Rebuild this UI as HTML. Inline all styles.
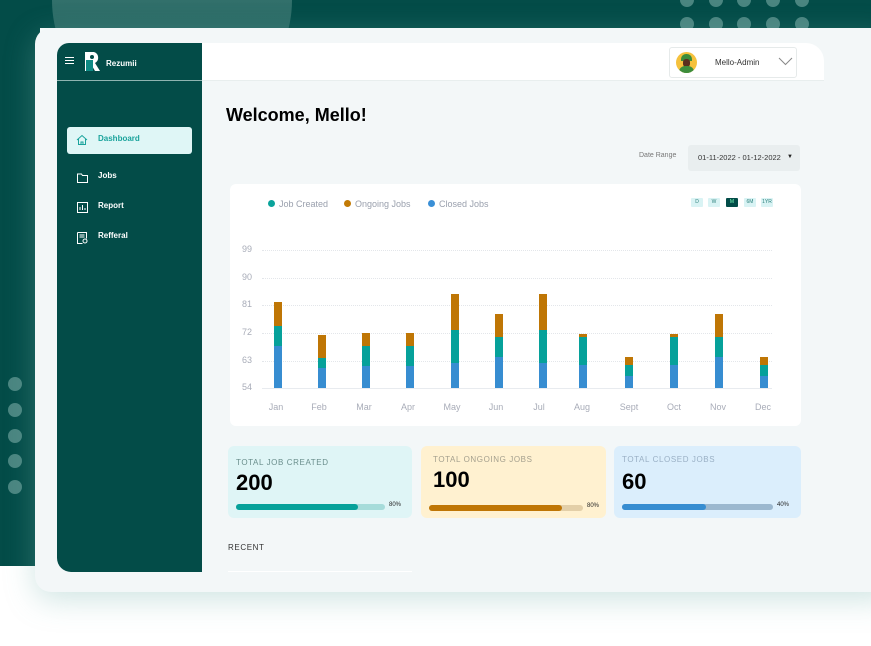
<!DOCTYPE html>
<html><head><meta charset="utf-8"><style>
*{margin:0;padding:0;box-sizing:border-box}
body{width:871px;height:646px;overflow:hidden;background:#fff;font-family:"Liberation Sans",sans-serif;position:relative}
.a{position:absolute}
.dot{position:absolute;width:14px;height:14px;border-radius:50%;background:#4a8580}
.bar{position:absolute;width:8px}
.grid{position:absolute;left:262px;width:510px;border-top:1px dotted #e3e6ea}
.yl{position:absolute;left:242px;width:20px;font-size:9px;color:#a8acb8;text-align:left}
.xl{position:absolute;top:402px;width:40px;margin-left:-20px;text-align:center;font-size:9px;color:#a8acb8}
.nav{position:absolute;left:98px;font-size:8px;color:#fff;font-weight:bold}
.stat{position:absolute;top:446px;height:72px;border-radius:6px}
.stat .t{position:absolute;left:8px;font-size:8px;letter-spacing:.6px}
.stat .n{position:absolute;left:8px;font-size:22px;font-weight:bold;color:#000}
.stat .tr{position:absolute;left:8px;height:6px;border-radius:3px}
.stat .f{position:absolute;left:0;top:0;height:6px;border-radius:3px}
.stat .p{position:absolute;font-size:6px;color:#222}
.pill{position:absolute;top:198px;width:12px;height:9px;background:#d9f3f4;font-size:5px;color:#2a7f7a;text-align:center;line-height:9px;border-radius:1px}
</style></head><body>
<div class="a" style="left:0;top:0;width:871px;height:28px;background:#034c48"></div>
<div class="a" style="left:0;top:0;width:40px;height:566px;background:#034c48"></div>
<div class="a" style="left:52px;top:-120px;width:240px;height:240px;border-radius:50%;background:linear-gradient(#5a8f8b,#2a6a65 60%)"></div>
<div class="dot" style="left:680px;top:-7px"></div><div class="dot" style="left:709px;top:-7px"></div><div class="dot" style="left:737px;top:-7px"></div><div class="dot" style="left:766px;top:-7px"></div><div class="dot" style="left:795px;top:-7px"></div>
<div class="dot" style="left:680px;top:17px"></div><div class="dot" style="left:709px;top:17px"></div><div class="dot" style="left:737px;top:17px"></div><div class="dot" style="left:766px;top:17px"></div><div class="dot" style="left:795px;top:17px"></div>
<div class="dot" style="left:8px;top:377px"></div><div class="dot" style="left:8px;top:403px"></div><div class="dot" style="left:8px;top:429px"></div><div class="dot" style="left:8px;top:454px"></div><div class="dot" style="left:8px;top:480px"></div>
<div class="a" style="left:35px;top:28px;width:860px;height:564px;background:#f3f7f8;border-radius:16px;box-shadow:0 8px 30px rgba(120,180,175,.35)"></div>
<div class="a" style="left:57px;top:43px;width:145px;height:529px;background:#034c48;border-radius:12px 0 0 14px"></div>
<div class="a" style="left:57px;top:80px;width:145px;height:1px;background:#8fb4b1"></div>
<div class="a" style="left:65px;top:57px;width:9px;height:1px;background:#fff;box-shadow:0 3px 0 #fff,0 6px 0 #fff"></div>
<svg class="a" style="left:83px;top:51px" width="20" height="21" viewBox="0 0 20 21"><path d="M2 1h9a6 6 0 0 1 1 11l5 8h-5l-4-7H7v7H2z" fill="#fff"/><rect x="3" y="9" width="7" height="11" fill="#0f8a84"/><circle cx="9" cy="6" r="2" fill="#034c48"/></svg>
<div class="a" style="left:106px;top:59px;font-size:8px;color:#fff;font-weight:bold">Rezumii</div>
<div class="a" style="left:67px;top:127px;width:125px;height:27px;background:#dff6f6;border-radius:3px"></div>
<svg class="a" style="left:76px;top:134px" width="12" height="12" viewBox="0 0 12 12" fill="none" stroke="#1aa39c"><path d="M1 6L6 1.5 11 6M2.5 5v5.5h7V5M5 10.5V8h2v2.5"/></svg>
<div class="nav" style="top:134px;color:#1aa39c">Dashboard</div>
<svg class="a" style="left:77px;top:173px" width="11" height="10" viewBox="0 0 11 10" fill="none" stroke="#fff"><path d="M.5 1h4l1 1.5h5V9.5H.5z"/></svg>
<div class="nav" style="top:171px">Jobs</div>
<svg class="a" style="left:77px;top:202px" width="11" height="11" viewBox="0 0 11 11" fill="none" stroke="#fff"><rect x=".5" y=".5" width="10" height="10"/><path d="M3 8V5M5.5 8V3M8 8V6"/></svg>
<div class="nav" style="top:201px">Report</div>
<svg class="a" style="left:77px;top:232px" width="11" height="12" viewBox="0 0 11 12" fill="none" stroke="#fff"><path d="M.5 .5h9v6M.5 .5v11h5M2.5 3h5M2.5 5h5"/><circle cx="8" cy="9" r="2"/></svg>
<div class="nav" style="top:231px">Refferal</div>
<div class="a" style="left:202px;top:43px;width:622px;height:38px;background:#fff;border-radius:0 18px 0 0;border-bottom:1px solid #e8eeee"></div>
<div class="a" style="left:669px;top:47px;width:128px;height:31px;border:1px solid #e6eaea;border-radius:3px;background:#fff"></div>
<div class="a" style="left:676px;top:52px;width:21px;height:21px;border-radius:50%;background:#f5c13c;overflow:hidden"><div class="a" style="left:5px;top:2px;width:11px;height:7px;background:#3c8d3c;border-radius:5px 5px 0 0"></div><div class="a" style="left:7px;top:7px;width:7px;height:8px;background:#5a2e1e;border-radius:3px"></div><div class="a" style="left:3px;top:14px;width:15px;height:8px;background:#3c8d3c;border-radius:6px 6px 0 0"></div></div>
<div class="a" style="left:715px;top:58px;font-size:8px;color:#333">Mello-Admin</div>
<svg class="a" style="left:778px;top:57px" width="15" height="9" viewBox="0 0 15 9" fill="none" stroke="#888"><path d="M1 1l6.5 6.5L14 1"/></svg>
<div class="a" style="left:226px;top:105px;font-size:18px;font-weight:bold;color:#000">Welcome, Mello!</div>
<div class="a" style="left:639px;top:152px;font-size:7px;color:#777">Date Range</div>
<div class="a" style="left:688px;top:145px;width:112px;height:26px;background:#e9eeef;border-radius:3px"></div>
<div class="a" style="left:698px;top:153px;font-size:7.5px;color:#333">01-11-2022 - 01-12-2022</div>
<div class="a" style="left:787px;top:154px;font-size:6px;color:#222">▼</div>
<div class="a" style="left:230px;top:184px;width:571px;height:242px;background:#fff;border-radius:6px"></div>
<div class="a" style="left:268px;top:200px;width:7px;height:7px;border-radius:50%;background:#0aa39b"></div>
<div class="a" style="left:279px;top:199px;font-size:9px;color:#9aa0ad">Job Created</div>
<div class="a" style="left:344px;top:200px;width:7px;height:7px;border-radius:50%;background:#c27a05"></div>
<div class="a" style="left:355px;top:199px;font-size:9px;color:#9aa0ad">Ongoing Jobs</div>
<div class="a" style="left:428px;top:200px;width:7px;height:7px;border-radius:50%;background:#3a8fd6"></div>
<div class="a" style="left:439px;top:199px;font-size:9px;color:#9aa0ad">Closed Jobs</div>
<div class="pill" style="left:691px">D</div><div class="pill" style="left:708px">W</div><div class="pill" style="left:726px;background:#034c48;color:#7fb">M</div><div class="pill" style="left:744px">6M</div><div class="pill" style="left:761px">1YR</div>
<div class="grid" style="top:250px"></div><div class="grid" style="top:278px"></div><div class="grid" style="top:305px"></div><div class="grid" style="top:333px"></div><div class="grid" style="top:361px"></div><div class="grid" style="top:388px;border-top:1px solid #e8ebef"></div>
<div class="yl" style="top:244px">99</div><div class="yl" style="top:272px">90</div><div class="yl" style="top:299px">81</div><div class="yl" style="top:327px">72</div><div class="yl" style="top:355px">63</div><div class="yl" style="top:382px">54</div>
<div class="bar" style="left:274px;top:302px;height:24px;background:#bf7605"></div><div class="bar" style="left:274px;top:326px;height:20px;background:#06a19a"></div><div class="bar" style="left:274px;top:346px;height:42px;background:#378dd1"></div>
<div class="bar" style="left:318px;top:335px;height:23px;background:#bf7605"></div><div class="bar" style="left:318px;top:358px;height:10px;background:#06a19a"></div><div class="bar" style="left:318px;top:368px;height:20px;background:#378dd1"></div>
<div class="bar" style="left:362px;top:333px;height:13px;background:#bf7605"></div><div class="bar" style="left:362px;top:346px;height:20px;background:#06a19a"></div><div class="bar" style="left:362px;top:366px;height:22px;background:#378dd1"></div>
<div class="bar" style="left:406px;top:333px;height:13px;background:#bf7605"></div><div class="bar" style="left:406px;top:346px;height:20px;background:#06a19a"></div><div class="bar" style="left:406px;top:366px;height:22px;background:#378dd1"></div>
<div class="bar" style="left:451px;top:294px;height:36px;background:#bf7605"></div><div class="bar" style="left:451px;top:330px;height:33px;background:#06a19a"></div><div class="bar" style="left:451px;top:363px;height:25px;background:#378dd1"></div>
<div class="bar" style="left:495px;top:314px;height:23px;background:#bf7605"></div><div class="bar" style="left:495px;top:337px;height:20px;background:#06a19a"></div><div class="bar" style="left:495px;top:357px;height:31px;background:#378dd1"></div>
<div class="bar" style="left:539px;top:294px;height:36px;background:#bf7605"></div><div class="bar" style="left:539px;top:330px;height:33px;background:#06a19a"></div><div class="bar" style="left:539px;top:363px;height:25px;background:#378dd1"></div>
<div class="bar" style="left:579px;top:334px;height:3px;background:#bf7605"></div><div class="bar" style="left:579px;top:337px;height:28px;background:#06a19a"></div><div class="bar" style="left:579px;top:365px;height:23px;background:#378dd1"></div>
<div class="bar" style="left:625px;top:357px;height:8px;background:#bf7605"></div><div class="bar" style="left:625px;top:365px;height:11px;background:#06a19a"></div><div class="bar" style="left:625px;top:376px;height:12px;background:#378dd1"></div>
<div class="bar" style="left:670px;top:334px;height:3px;background:#bf7605"></div><div class="bar" style="left:670px;top:337px;height:28px;background:#06a19a"></div><div class="bar" style="left:670px;top:365px;height:23px;background:#378dd1"></div>
<div class="bar" style="left:715px;top:314px;height:23px;background:#bf7605"></div><div class="bar" style="left:715px;top:337px;height:20px;background:#06a19a"></div><div class="bar" style="left:715px;top:357px;height:31px;background:#378dd1"></div>
<div class="bar" style="left:760px;top:357px;height:8px;background:#bf7605"></div><div class="bar" style="left:760px;top:365px;height:11px;background:#06a19a"></div><div class="bar" style="left:760px;top:376px;height:12px;background:#378dd1"></div>
<div class="xl" style="left:276px">Jan</div><div class="xl" style="left:319px">Feb</div><div class="xl" style="left:364px">Mar</div><div class="xl" style="left:408px">Apr</div><div class="xl" style="left:452px">May</div><div class="xl" style="left:496px">Jun</div><div class="xl" style="left:539px">Jul</div><div class="xl" style="left:582px">Aug</div><div class="xl" style="left:629px">Sept</div><div class="xl" style="left:674px">Oct</div><div class="xl" style="left:718px">Nov</div><div class="xl" style="left:763px">Dec</div>
<div class="stat" style="left:228px;width:184px;background:#dff5f6">
<div class="t" style="top:12px;color:#6a8e8c">TOTAL JOB CREATED</div><div class="n" style="top:24px">200</div>
<div class="tr" style="top:58px;width:149px;background:#a6dcda"><div class="f" style="width:122px;background:#06a19a"></div></div><div class="p" style="left:161px;top:56px">80%</div></div>
<div class="stat" style="left:421px;width:185px;background:#fff1d0">
<div class="t" style="top:9px;left:12px;color:#a5a08e">TOTAL ONGOING JOBS</div><div class="n" style="top:21px;left:12px">100</div>
<div class="tr" style="top:59px;width:154px;background:#e3cfa8"><div class="f" style="width:133px;background:#bf7605"></div></div><div class="p" style="left:166px;top:57px">80%</div></div>
<div class="stat" style="left:614px;width:187px;background:#dbeefc">
<div class="t" style="top:9px;color:#9ab0c5">TOTAL CLOSED JOBS</div><div class="n" style="top:23px">60</div>
<div class="tr" style="top:58px;width:151px;background:#9cb8cf"><div class="f" style="width:84px;background:#378dd1"></div></div><div class="p" style="left:163px;top:56px">40%</div></div>
<div class="a" style="left:228px;top:543px;font-size:8px;color:#333;letter-spacing:.6px">RECENT</div>
<div class="a" style="left:228px;top:571px;width:184px;height:1px;background:#fff"></div>
</body></html>
